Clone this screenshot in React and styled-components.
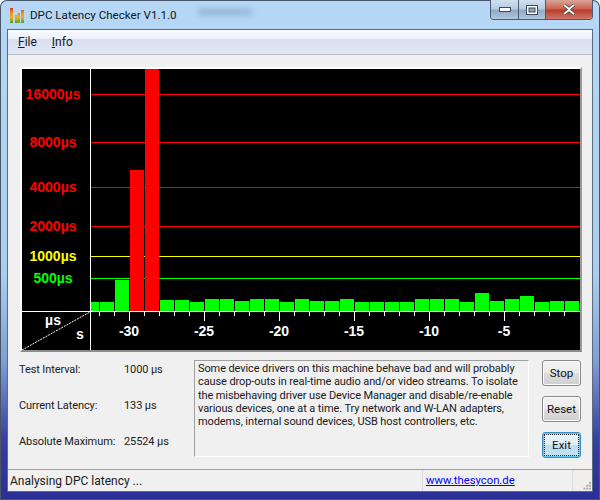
import React from 'react';
import styled, { createGlobalStyle } from 'styled-components';

const GlobalStyle = createGlobalStyle`
  * {
    box-sizing: border-box;
  }
  html, body {
    margin: 0;
    padding: 0;
    width: 600px;
    height: 500px;
    overflow: hidden;
    background: #fff;
  }
`;

const uiFont = `Roboto, "Open Sans", sans-serif`;
const chartFont = `"Liberation Sans", sans-serif`;

const Window = styled.div`
  position: relative;
  width: 600px;
  height: 500px;
  display: flex;
  flex-direction: column;
  padding: 0 7px 8px;
  border-radius: 7px 7px 0 0;
  box-shadow: inset 0 0 0 1px #4a5668;
  background: linear-gradient(180deg, #b6d8f6 0%, #a9cdee 55%, #7f9fd6 72%, #35409f 88%, #2a2f96 100%);
  font-family: ${uiFont};
  color: #1a1a1a;
`;

// what shows through the glass from the window behind
const GlassSmudge = styled.div`
  position: absolute;
  left: 198px;
  top: 9px;
  width: 54px;
  height: 6px;
  background: #8fb0d0;
  filter: blur(3px);
`;

const TitleBar = styled.div`
  position: relative;
  height: 29px;
  flex: none;
  display: flex;
  align-items: flex-start;
`;

const TitleIcon = styled.svg`
  width: 16px;
  height: 16px;
  margin: 7px 5px 0 2px;
`;

const TitleText = styled.span`
  flex: 1;
  margin-top: 7px;
  font-size: 11.6px;
  line-height: 16px;
  color: #10151c;
`;

const Caption = styled.div`
  display: flex;
  height: 20px;
  border: 1px solid #4a5a70;
  border-top: none;
  border-radius: 0 0 4px 4px;
  overflow: hidden;
`;

const CaptionButton = styled.div`
  width: ${({ $wide }) => ($wide ? '47px' : '27px')};
  display: flex;
  align-items: center;
  justify-content: center;
  background: ${({ $close }) =>
    $close
      ? 'linear-gradient(180deg, #dba496 0%, #c9604d 48%, #b93a25 52%, #d0786a 100%)'
      : 'linear-gradient(180deg, #cfe0f0 0%, #b5cce2 48%, #8ea9c4 52%, #b0c8dc 100%)'};
  border-left: ${({ $first }) => ($first ? 'none' : '1px solid #4a5a70')};
`;

const Client = styled.div`
  flex: 1;
  min-height: 0;
  display: flex;
  flex-direction: column;
  background: #f0f0f0;
  border: 1px solid #5b6b80;
`;

const MenuBar = styled.div`
  height: 25px;
  flex: none;
  display: flex;
  align-items: center;
  gap: 15px;
  padding-left: 10px;
  font-size: 12px;
  background: linear-gradient(180deg, #f9fbfe 0%, #eef1fa 35%, #d9dff1 40%, #e2e6f4 100%);
  border-bottom: 1px solid #b6bccc;
`;

const MenuItem = styled.span`
  &::first-letter {
    text-decoration: underline;
  }
`;

const Content = styled.div`
  flex: 1;
  min-height: 0;
  display: flex;
  flex-direction: column;
  padding: 12px 10px 0 12px;
`;

const ChartFrame = styled.div`
  flex: none;
  width: 562px;
  height: 285px;
  border: 2px solid;
  border-color: #fff #9a9a9a #8c8c8c #fff;
  background: #000;
`;

const Chart = styled.svg`
  display: block;
  width: 558px;
  height: 281px;
`;

const ChartLabel = styled.text`
  font-family: ${chartFont};
  font-weight: 700;
  font-size: 14px;
  text-anchor: middle;
`;

const Lower = styled.div`
  flex: 1;
  display: flex;
  padding-top: 8px;
`;

const Readouts = styled.div`
  width: 175px;
  margin-left: -1px;
  display: flex;
  flex-direction: column;
  gap: 18px;
`;

const ReadoutRow = styled.div`
  display: flex;
  height: 18px;
  align-items: center;
  font-size: 11px;
  letter-spacing: -0.1px;
  white-space: nowrap;
`;

const ReadoutLabel = styled.span`
  width: 105px;
`;

const Notice = styled.div`
  width: 335px;
  height: 97px;
  padding: 1px 0 0 3px;
  border: 1px solid #a0a0a0;
  border-right-color: #fff;
  border-bottom-color: #fff;
  font-size: 11px;
  letter-spacing: -0.1px;
  line-height: 13.25px;
`;

const Buttons = styled.div`
  display: flex;
  flex-direction: column;
  gap: 10px;
  margin-left: 13px;
`;

const Button = styled.button`
  width: 39px;
  height: 26px;
  padding: 0;
  font-family: ${uiFont};
  font-size: 11.5px;
  color: #111;
  border: 1px solid ${({ $primary }) => ($primary ? '#3c8fc4' : '#8a8a8a')};
  border-radius: 3px;
  box-shadow: inset 0 0 0 1px ${({ $primary }) => ($primary ? '#5fc8ee' : '#fbfbfb')};
  background: ${({ $primary }) =>
    $primary
      ? 'linear-gradient(180deg, #e9f5fb 0%, #dceef8 48%, #bddff1 52%, #c4e2f2 100%)'
      : 'linear-gradient(180deg, #f3f3f3 0%, #ebebeb 48%, #dcdcdc 52%, #cfcfcf 100%)'};
  outline: ${({ $primary }) => ($primary ? '1px dotted #222' : 'none')};
  outline-offset: -3px;
`;

const StatusBar = styled.div`
  height: 22px;
  flex: none;
  display: flex;
  align-items: center;
  border-top: 1px solid #a0a0a0;
  font-size: 12px;
`;

const StatusText = styled.div`
  width: 414px;
  padding-left: 2px;
`;

const StatusLink = styled.a`
  flex: 1;
  padding-left: 3px;
  height: 21px;
  line-height: 21px;
  font-size: 11.3px;
  color: #0000ff;
  text-decoration: underline;
  border-left: 1px solid #dcdcdc;
`;

const Grip = styled.svg`
  flex: none;
  width: 20px;
  height: 21px;
  background: #f0eeec;
  border-left: 1px solid #dcdcdc;
`;

// bar tops, one every 15px from x=100 on the screen
const bars = [302, 280, 170, 69, 300, 300, 302, 299, 299, 301, 299, 299, 302, 299, 301, 301,
  299, 302, 302, 302, 302, 299, 299, 299, 302, 293, 301, 299, 296, 302, 301, 301];

const grid = [
  { y: 94, color: '#ff0000', label: '16000µs' },
  { y: 142, color: '#ff0000', label: '8000µs' },
  { y: 187, color: '#ff0000', label: '4000µs' },
  { y: 226, color: '#ff0000', label: '2000µs' },
  { y: 256, color: '#ffff00', label: '1000µs' },
  { y: 278, color: '#00ff00', label: '500µs' },
];

const ticks = Array.from({ length: 32 }, (_, i) => 99 + i * 15);
const seconds = [-30, -25, -20, -15, -10, -5];

const LatencyChart = () => (
  <Chart viewBox="22 69 558 281">
    {grid.map((g) => (
      <line key={g.y} x1="91" x2="580" y1={g.y + 0.5} y2={g.y + 0.5} stroke={g.color} />
    ))}
    {grid.map((g) => (
      <ChartLabel key={g.label} x="53" y={g.y + 5} fill={g.color}>{g.label}</ChartLabel>
    ))}
    <rect x="91" y="302" width="8" height="9" fill="#00ff00" />
    {bars.map((top, i) => (
      <rect key={i} x={100 + i * 15} y={top} width="14" height={311 - top}
        fill={top < 260 ? '#ff0000' : '#00ff00'} />
    ))}
    <line x1="22" x2="580" y1="311.5" y2="311.5" stroke="#fff" />
    <line x1="90.5" x2="90.5" y1="69" y2="350" stroke="#fff" />
    {ticks.map((x) => {
      const major = (x - 129) % 75 === 0;
      return <line key={x} x1={x + 0.5} x2={x + 0.5} y1="311" y2={major ? 321 : 316} stroke="#fff" />;
    })}
    {seconds.map((s) => (
      <ChartLabel key={s} x={129 + (s + 30) * 15} y="336" fill="#fff">{s}</ChartLabel>
    ))}
    <line x1="22" y1="350" x2="90" y2="312" stroke="#fff" strokeDasharray="2 1" />
    <ChartLabel x="53" y="325" fill="#fff">µs</ChartLabel>
    <ChartLabel x="80" y="339" fill="#fff">s</ChartLabel>
  </Chart>
);

const AppIcon = () => (
  <TitleIcon viewBox="0 0 16 16">
    <defs>
      <linearGradient id="heat" x1="0" y1="1" x2="0" y2="16" gradientUnits="userSpaceOnUse">
        <stop offset="0" stopColor="#e0352a" />
        <stop offset="0.35" stopColor="#ef9a1e" />
        <stop offset="0.65" stopColor="#e8b020" />
        <stop offset="1" stopColor="#4f9e2c" />
      </linearGradient>
    </defs>
    <rect x="1" y="1" width="3" height="15" fill="url(#heat)" />
    <rect x="6" y="8" width="2.5" height="8" fill="url(#heat)" />
    <rect x="8.5" y="6" width="2.5" height="10" fill="url(#heat)" />
    <rect x="12" y="3" width="3" height="13" fill="url(#heat)" />
  </TitleIcon>
);

const gripDots = [[17, 12], [14, 15], [17, 15], [11, 18], [14, 18], [17, 18]];

const App = () => (
  <>
    <GlobalStyle />
    <Window>
      <GlassSmudge />
      <TitleBar>
        <AppIcon />
        <TitleText>DPC Latency Checker V1.1.0</TitleText>
        <Caption>
          <CaptionButton $first>
            <svg width="12" height="5" viewBox="0 0 12 5"><rect x="0.5" y="0.5" width="11" height="4" fill="#fff" stroke="#3c4a5c" /></svg>
          </CaptionButton>
          <CaptionButton>
            <svg width="12" height="10" viewBox="0 0 12 10"><rect x="0.5" y="0.5" width="11" height="9" fill="#fff" stroke="#3c4a5c" /><rect x="3" y="3" width="6" height="4" fill="#8fa6bd" stroke="#3c4a5c" /></svg>
          </CaptionButton>
          <CaptionButton $wide $close>
            <svg width="14" height="11" viewBox="0 0 14 11"><path d="M2 1l5 4 5-4M2 10l5-4 5 4" fill="none" stroke="#3c3c3c" strokeWidth="3.4" /><path d="M2 1l5 4 5-4M2 10l5-4 5 4" fill="none" stroke="#fff" strokeWidth="2" /></svg>
          </CaptionButton>
        </Caption>
      </TitleBar>
      <Client>
        <MenuBar>
          <MenuItem>File</MenuItem>
          <MenuItem>Info</MenuItem>
        </MenuBar>
        <Content>
          <ChartFrame><LatencyChart /></ChartFrame>
          <Lower>
            <Readouts>
              <ReadoutRow><ReadoutLabel>Test Interval:</ReadoutLabel><span>1000 µs</span></ReadoutRow>
              <ReadoutRow><ReadoutLabel>Current Latency:</ReadoutLabel><span>133 µs</span></ReadoutRow>
              <ReadoutRow><ReadoutLabel>Absolute Maximum:</ReadoutLabel><span>25524 µs</span></ReadoutRow>
            </Readouts>
            <Notice>
              Some device drivers on this machine behave bad and will probably cause drop-outs in real-time audio and/or video streams. To isolate the misbehaving driver use Device Manager and disable/re-enable various devices, one at a time. Try network and W-LAN adapters, modems, internal sound devices, USB host controllers, etc.
            </Notice>
            <Buttons>
              <Button>Stop</Button>
              <Button>Reset</Button>
              <Button $primary>Exit</Button>
            </Buttons>
          </Lower>
        </Content>
        <StatusBar>
          <StatusText>Analysing DPC latency ...</StatusText>
          <StatusLink href="#">www.thesycon.de</StatusLink>
          <Grip viewBox="0 0 20 21">
            {gripDots.map(([x, y]) => (
              <rect key={`${x}-${y}`} x={x} y={y} width="2" height="2" fill="#a8a8a8" />
            ))}
          </Grip>
        </StatusBar>
      </Client>
    </Window>
  </>
);

export default App;
